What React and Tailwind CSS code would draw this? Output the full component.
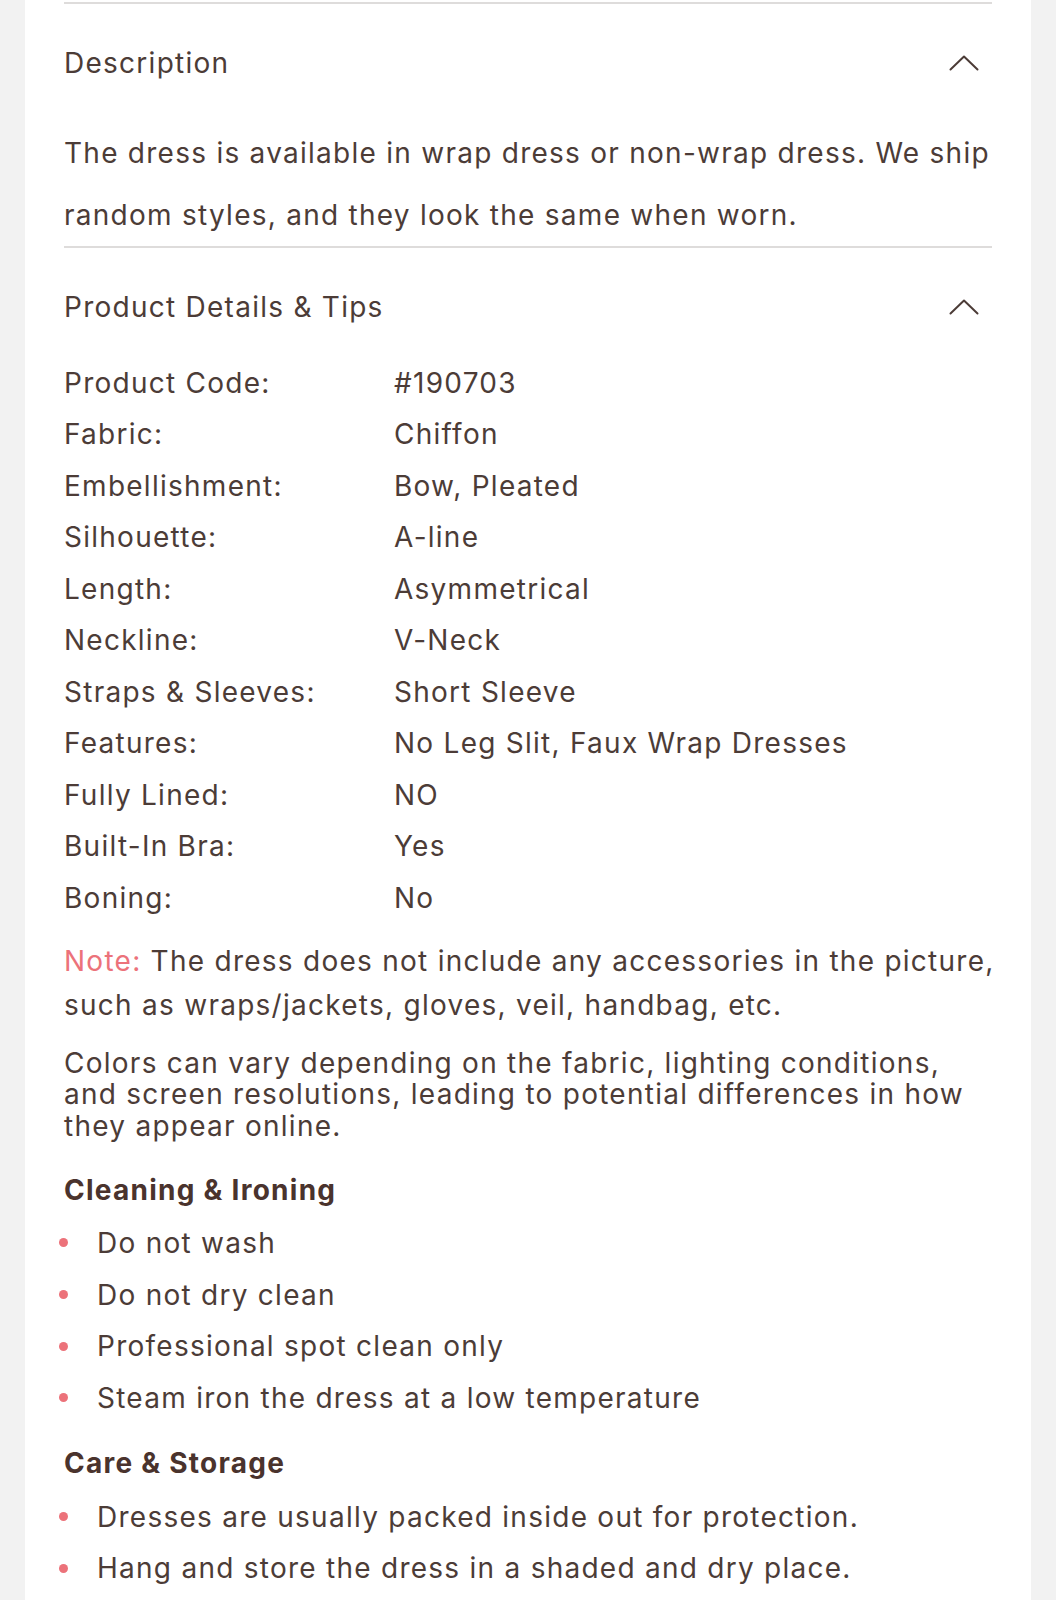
import React from "react";

const Chevron = () => (
  <svg width="30" height="16" viewBox="0 0 30 16" fill="none" className="shrink-0 mr-[13px]">
    <polyline points="1.5,14.5 15,1.5 28.5,14.5" stroke="#4c3c37" strokeWidth="2" strokeLinecap="round" strokeLinejoin="round" />
  </svg>
);

const details = [
  ["Product Code:", "#190703"],
  ["Fabric:", "Chiffon"],
  ["Embellishment:", "Bow, Pleated"],
  ["Silhouette:", "A-line"],
  ["Length:", "Asymmetrical"],
  ["Neckline:", "V-Neck"],
  ["Straps & Sleeves:", "Short Sleeve"],
  ["Features:", "No Leg Slit, Faux Wrap Dresses"],
  ["Fully Lined:", "NO"],
  ["Built-In Bra:", "Yes"],
  ["Boning:", "No"],
];

const Bullet = ({ children }) => (
  <li className="flex items-center h-[51.7px]">
    <span className="w-[9px] h-[9px] rounded-full bg-[#ec727a] shrink-0 ml-[-5px]" />
    <span className="ml-[29px] whitespace-nowrap">{children}</span>
  </li>
);

export default function App() {
  return (
    <div
      className="min-h-[1600px] bg-[#f2f2f2] px-[25px] text-[#4c3c37] text-[28px] tracking-[0.045em]"
      style={{ fontFamily: "Inter, 'Noto Sans', sans-serif" }}
    >
      <div className="bg-white min-h-[1600px] px-[39px] pt-[2px]">
        <div className="h-[2px] bg-[#dedcdb]" />

        <div className="mt-[43px] h-[32px] flex items-center justify-between">
          <span className="leading-[32px]">Description</span>
          <Chevron />
        </div>
        <p className="mt-[43px] leading-[62px] whitespace-nowrap">
          The dress is available in wrap dress or non-wrap dress. We ship
          <br />
          random styles, and they look the same when worn.
        </p>
        <div className="h-[2px] bg-[#dedcdb]" />

        <div className="mt-[43px] h-[32px] flex items-center justify-between">
          <span className="leading-[32px]">Product Details &amp; Tips</span>
          <Chevron />
        </div>

        <div className="mt-[34px]">
          {details.map(([k, v]) => (
            <div key={k} className="flex items-center h-[51.5px] whitespace-nowrap">
              <span className="w-[330px] shrink-0">{k}</span>
              <span>{v}</span>
            </div>
          ))}
        </div>

        <p className="mt-[15px] leading-[44px] whitespace-nowrap">
          <span className="text-[#ec727a]">Note:</span> The dress does not include any accessories in the picture,
          <br />
          such as wraps/jackets, gloves, veil, handbag, etc.
        </p>

        <p className="mt-[21px] leading-[31.5px] whitespace-nowrap">
          Colors can vary depending on the fabric, lighting conditions,
          <br />
          and screen resolutions, leading to potential differences in how
          <br />
          they appear online.
        </p>

        <h3 className="mt-[32px] leading-[32px] font-bold text-[#4a332d]">Cleaning &amp; Ironing</h3>
        <ul className="mt-[11px]">
          <Bullet>Do not wash</Bullet>
          <Bullet>Do not dry clean</Bullet>
          <Bullet>Professional spot clean only</Bullet>
          <Bullet>Steam iron the dress at a low temperature</Bullet>
        </ul>

        <h3 className="mt-[23px] leading-[32px] font-bold text-[#4a332d]">Care &amp; Storage</h3>
        <ul className="mt-[12px]">
          <Bullet>Dresses are usually packed inside out for protection.</Bullet>
          <Bullet>Hang and store the dress in a shaded and dry place.</Bullet>
        </ul>
      </div>
    </div>
  );
}
